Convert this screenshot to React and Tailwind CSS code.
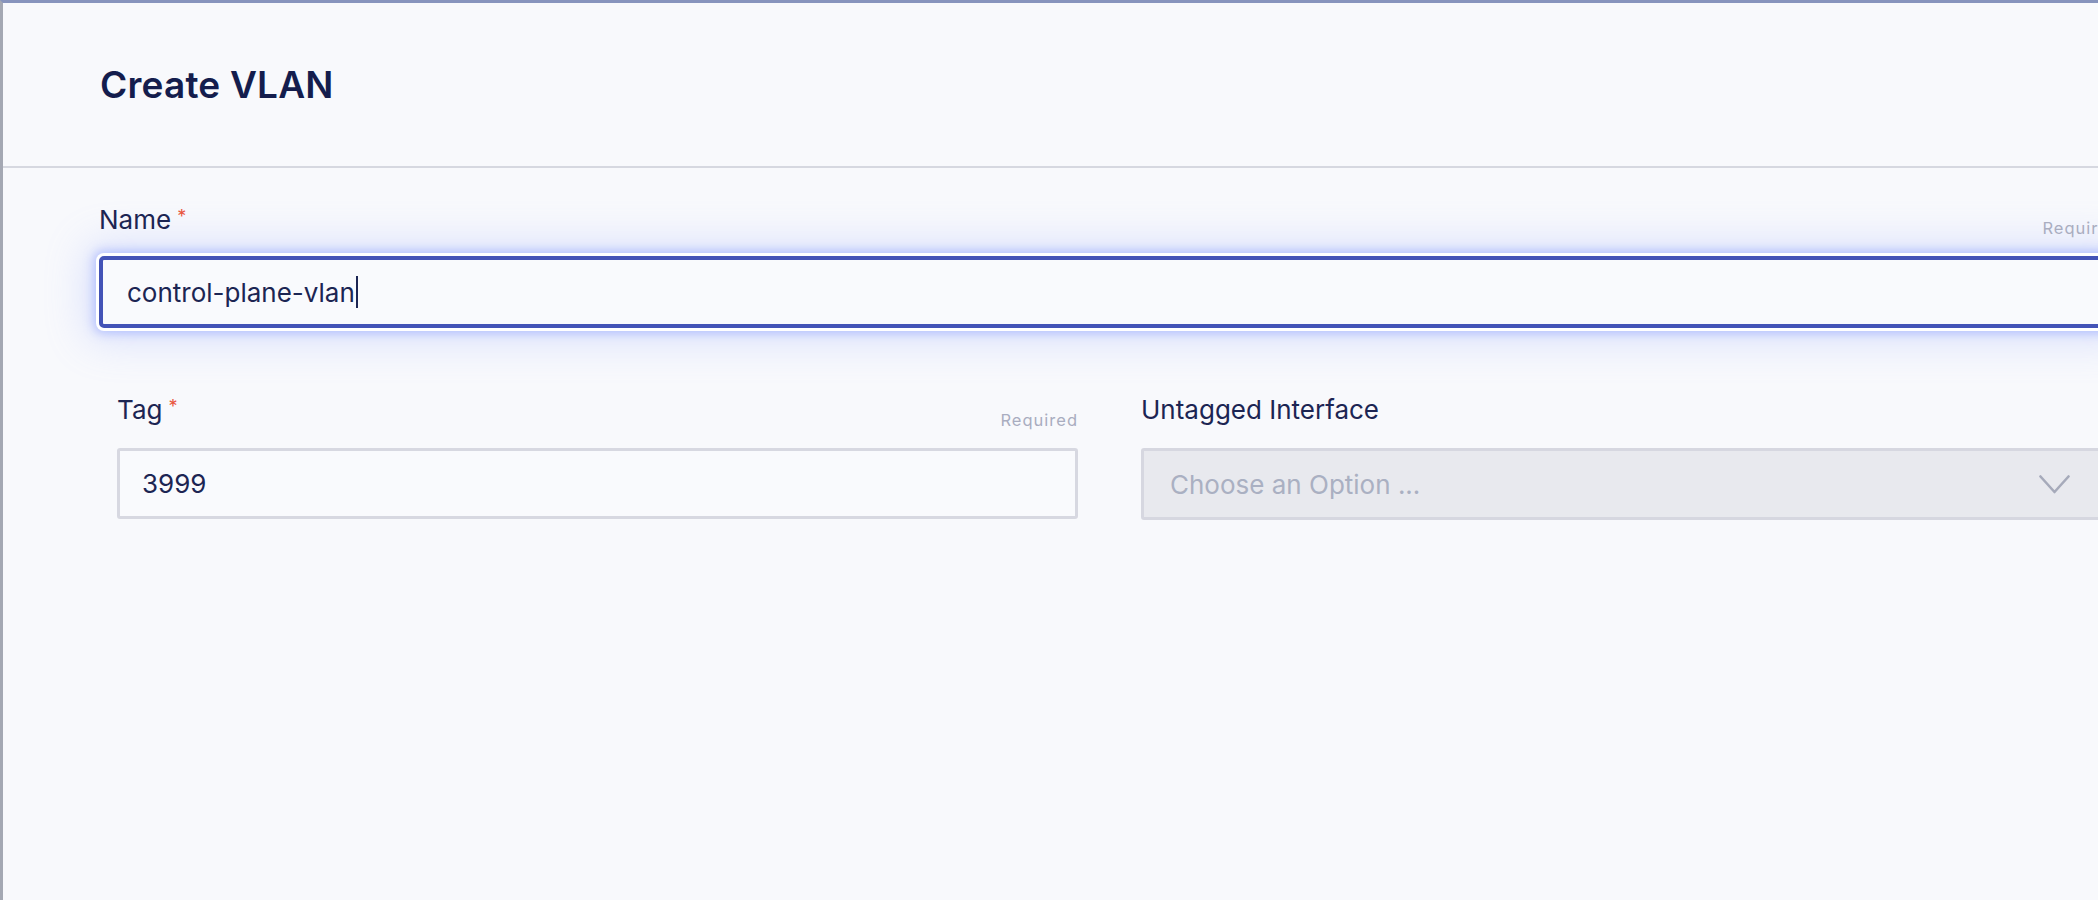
import React from "react";

const Asterisk = () => (
  <span className="ml-[6px] text-[18px] leading-none text-[#e8553e] self-start mt-[1px]">*</span>
);

const FieldLabel = ({ children, required }) => (
  <div className="flex items-start text-[26px] leading-none text-[#1c2553]">
    <span>{children}</span>
    {required && <Asterisk />}
  </div>
);

const Chevron = () => (
  <svg width="31" height="19" viewBox="0 0 31 19" fill="none">
    <polyline
      points="1.5,1.5 15.5,17 29.5,1.5"
      stroke="#a6aaba"
      strokeWidth="2.6"
      strokeLinecap="round"
      strokeLinejoin="round"
    />
  </svg>
);

export default function App() {
  return (
    <div className="w-[2098px] h-[900px] overflow-hidden bg-[#f8f9fc] font-['Inter',sans-serif]">
      <div className="w-[2222px] h-full border-t-[3px] border-t-[#8794bd] border-l-[3px] border-l-[#a4a8b3]">
        {/* header */}
        <div className="h-[165px] pt-[63px] pl-[97px] border-b-2 border-[#d6d8e0]">
          <h1 className="text-[37px] leading-none font-semibold text-[#141d4d] tracking-[0.2px]">
            Create VLAN
          </h1>
        </div>

        {/* form */}
        <div className="pt-[39px] pl-[96px] w-[2117px]">
          <div className="w-[2021px]">
            <div className="flex justify-between items-start h-[30px]">
              <FieldLabel required>Name</FieldLabel>
              <span className="mt-[13px] text-[16.5px] leading-none text-[#a9adc0] tracking-[1px]">
                Required
              </span>
            </div>
            <div className="mt-[19px] h-[72px] rounded-[5px] border-4 border-[#4353b7] bg-[#f9fafd] flex items-center pl-[24px] shadow-[0_0_0_3px_#ffffff,0_0_10px_6px_rgba(140,160,255,0.5),0_0_42px_12px_rgba(150,168,255,0.3)]">
              <span className="text-[26px] text-[#1c2553]">control-plane-vlan</span>
              <span className="ml-[1px] w-[2px] h-[32px] bg-[#1c2553]" />
            </div>
          </div>

          <div className="mt-[69px] px-[18px] grid grid-cols-2 gap-[63px] w-[2021px]">
            <div>
              <div className="flex justify-between items-start h-[31px]">
                <FieldLabel required>Tag</FieldLabel>
                <span className="mt-[15px] text-[16.5px] leading-none text-[#a9adc0] tracking-[1px]">
                  Required
                </span>
              </div>
              <div className="mt-[20px] h-[71px] rounded-[3px] border-[3px] border-[#d7d8e1] bg-[#f9fafd] flex items-center pl-[22px]">
                <span className="text-[26px] text-[#1c2553]">3999</span>
              </div>
            </div>
            <div>
              <div className="flex items-start h-[31px]">
                <FieldLabel>Untagged Interface</FieldLabel>
              </div>
              <div className="mt-[20px] h-[72px] rounded-[3px] border-[3px] border-[#d6d7e0] bg-[#e8e9ee] flex items-center justify-between pl-[26px] pr-[29px]">
                <span className="text-[26px] text-[#aab0c2]">Choose an Option ...</span>
                <Chevron />
              </div>
            </div>
          </div>
        </div>
      </div>
    </div>
  );
}
